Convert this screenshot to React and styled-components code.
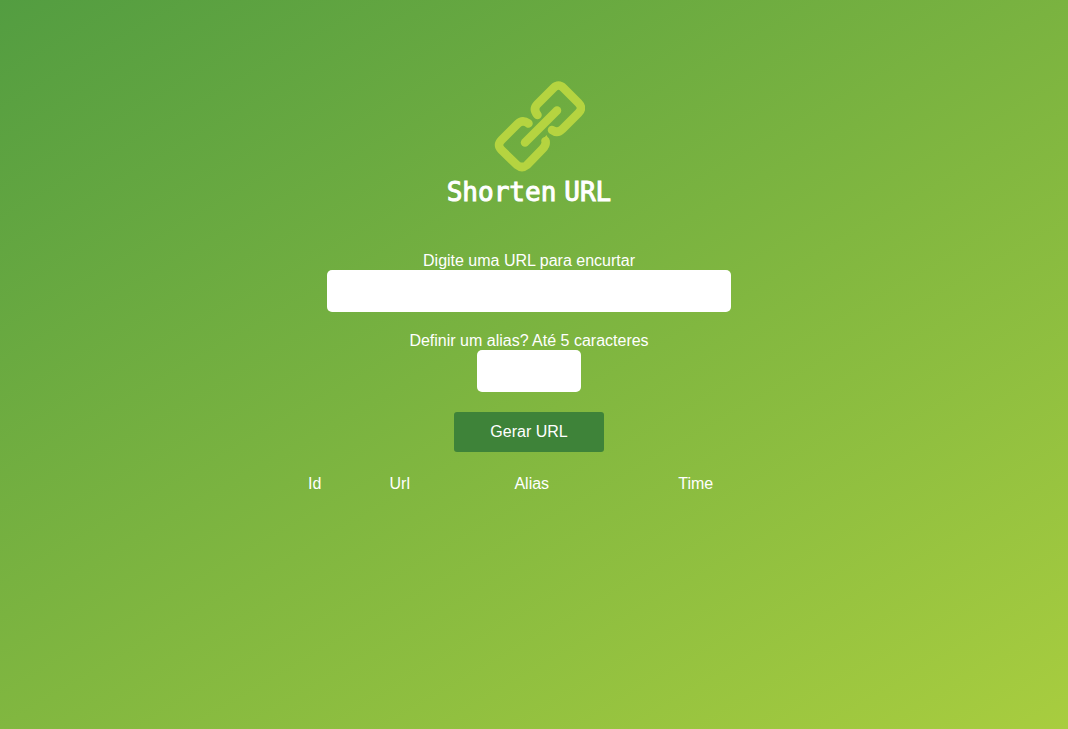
import React, { useState } from "react";
import styled, { createGlobalStyle } from "styled-components";

const GlobalStyle = createGlobalStyle`
  * { box-sizing: border-box; }
  body {
    margin: 0;
    min-height: 100vh;
    background: linear-gradient(150deg, #539d41, #a8cd3f) no-repeat;
    color: #fff;
    font: 16px/18px "Liberation Sans", Arial, sans-serif;
  }
`;

const Page = styled.main`
  display: flex;
  flex-direction: column;
  align-items: center;
  gap: 20px;
  padding: 80px 10px 20px 0;
`;

const Logo = styled.header`
  display: flex;
  flex-direction: column;
  align-items: center;
  margin-bottom: 20px;
`;

const LinkIcon = styled.svg`
  width: 112px;
  height: 92px;
  fill: none;
  stroke: #b5d440;
  stroke-width: 8.5;
  stroke-linecap: round;
  stroke-linejoin: round;
`;

const Title = styled.h1`
  display: flex;
  gap: 8px;
  margin: 0;
  font: 26px/40px "DejaVu Sans Mono", monospace;
  -webkit-text-stroke: 1px #fff;
`;

const Form = styled.form`
  display: flex;
  flex-direction: column;
  align-items: center;
  gap: 20px;
  width: 100%;
`;

const Field = styled.div`
  display: flex;
  flex-direction: column;
  align-items: center;
  width: 100%;
`;

const Label = styled.label`
  text-align: center;
`;

const Input = styled.input`
  width: ${({ $width }) => $width};
  max-width: 100%;
  height: 42px;
  padding: 0 10px;
  border: 0;
  border-radius: 5px;
  background: #fff;
  font: inherit;
`;

const Button = styled.button`
  width: 150px;
  height: 40px;
  border: 0;
  border-radius: 3px;
  background: #3e8339;
  color: #fff;
  font: inherit;
  cursor: pointer;
`;

const Table = styled.table`
  width: 500px;
  max-width: 100%;
`;

const HeadCell = styled.th`
  font-weight: normal;
`;

const columns = ["Id", "Url", "Alias", "Time"];

export default function App() {
  const [url, setUrl] = useState("");
  const [alias, setAlias] = useState("");

  return (
    <>
      <GlobalStyle />
      <Page>
        <Logo>
          <LinkIcon viewBox="-22.500 -1 112 92" aria-hidden="true">
            <path d="M42 34Q37 28 42 23L58 7Q63 2 68 7L83 22Q88 27 83 32L67 48Q62 53 56.500 49" />
            <path d="M33 42.500Q27 38 22 43L6 59Q1 64 6 69L21.500 84Q26.500 88 31.500 84L47 68Q51 64 50 60" />
            <path d="M29.500 61.500L61.500 29.500" />
            <path d="M46 60L51 54L54 60Z" fill="#b5d440" stroke="none" />
          </LinkIcon>
          <Title>
            <span>Shorten</span>
            <span>URL</span>
          </Title>
        </Logo>
        <Form onSubmit={(e) => e.preventDefault()}>
          <Field>
            <Label htmlFor="url">Digite uma URL para encurtar</Label>
            <Input id="url" type="text" $width="404px" value={url} onChange={(e) => setUrl(e.target.value)} />
          </Field>
          <Field>
            <Label htmlFor="alias">Definir um alias? Até 5 caracteres</Label>
            <Input id="alias" type="text" maxLength={5} $width="104px" value={alias} onChange={(e) => setAlias(e.target.value)} />
          </Field>
          <Button type="submit">Gerar URL</Button>
        </Form>
        <Table>
          <thead>
            <tr>
              {columns.map((name) => (
                <HeadCell key={name} scope="col">{name}</HeadCell>
              ))}
            </tr>
          </thead>
        </Table>
      </Page>
    </>
  );
}
